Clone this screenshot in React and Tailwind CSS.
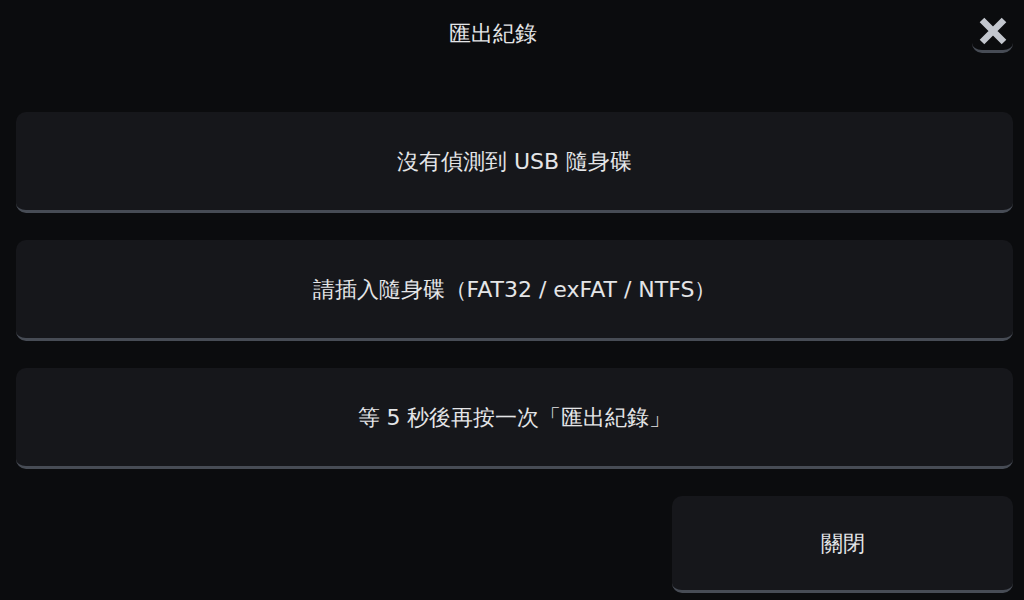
import React from "react";

function Card({ children }) {
  return (
    <div className="h-[101px] w-full flex items-center justify-center rounded-[10px] bg-[#16171b] border-b-[3px] border-[#474c55] text-[22px] text-[#e4e5e7]">
      {children}
    </div>
  );
}

export default function App() {
  return (
    <div className="w-[1024px] h-[600px] bg-[#0b0c0e] flex flex-col pl-4 pr-[11px] overflow-hidden font-['DejaVu_Sans',sans-serif]">
      <div className="h-[66px] flex items-center">
        <div className="flex-1 text-center text-[22px] text-[#e4e5e7] pr-[3px]">匯出紀錄</div>
        <button className="w-[41px] h-[41px] mt-[-1px] flex items-center justify-center rounded-[10px] border-b-[3px] border-[#474c55] bg-transparent">
          <svg width="28" height="28" viewBox="0 0 28 28">
            <path d="M3 3 L25 25 M25 3 L3 25" stroke="#c3c7ce" strokeWidth="6.5" strokeLinecap="butt" />
          </svg>
        </button>
      </div>
      <div className="mt-[46px] flex flex-col gap-[27px]">
        <Card>沒有偵測到 USB 隨身碟</Card>
        <Card>請插入隨身碟（FAT32 / exFAT / NTFS）</Card>
        <Card>等 5 秒後再按一次「匯出紀錄」</Card>
      </div>
      <div className="mt-[27px] flex justify-end">
        <button className="w-[341px] h-[97px] flex items-center justify-center rounded-[10px] bg-[#16171b] border-b-[3px] border-[#474c55] text-[22px] text-[#e4e5e7]">
          關閉
        </button>
      </div>
    </div>
  );
}
